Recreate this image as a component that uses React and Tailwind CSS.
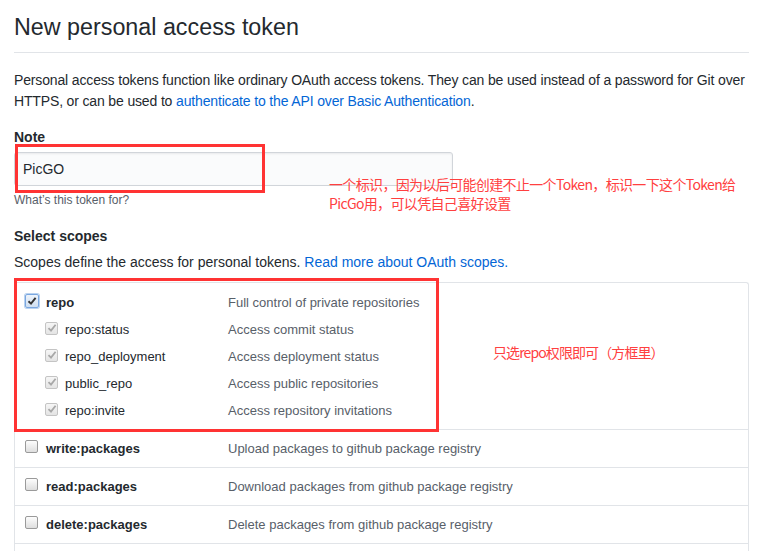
import React from "react";

const font = { fontFamily: '"Liberation Sans", "Noto Sans CJK SC", sans-serif' };

function Check({ kind }) {
  if (kind === "focus") {
    return (
      <span className="flex h-[14px] w-[14px] items-center justify-center rounded-[2px] border border-[#7aa7e0] bg-gradient-to-b from-[#eef4fb] to-[#cfdff1] shadow-[0_0_0_1px_#b9d2ef]">
        <svg width="10" height="10" viewBox="0 0 10 10">
          <path d="M1.5 5.2 L4 7.6 L8.6 1.8" fill="none" stroke="#333" strokeWidth="1.9" />
        </svg>
      </span>
    );
  }
  if (kind === "disabled") {
    return (
      <span className="flex h-[13px] w-[13px] items-center justify-center rounded-[2px] border border-[#c4c4c4] bg-gradient-to-b from-[#f6f6f6] to-[#e4e4e4]">
        <svg width="10" height="10" viewBox="0 0 10 10">
          <path d="M1.5 5.2 L4 7.6 L8.6 1.8" fill="none" stroke="#a8a8a8" strokeWidth="1.8" />
        </svg>
      </span>
    );
  }
  return (
    <span className="block h-[13px] w-[13px] rounded-[2px] border border-[#9a9a9a] bg-gradient-to-b from-[#fdfdfd] to-[#dedede]" />
  );
}

function SubRow({ name, desc, top, kind }) {
  return (
    <div className="flex h-[27px] items-center">
      <div className={`flex items-center ${top ? "w-[213px] pl-[10px]" : "w-[213px] pl-[30px]"}`}>
        <span className="-mt-[3px]">
          <Check kind={kind} />
        </span>
        <span className={`ml-[7px] text-[13px] text-[#24292e] ${top ? "font-bold" : ""}`}>{name}</span>
      </div>
      <div className="text-[13px] text-[#586069]">{desc}</div>
    </div>
  );
}

function PkgRow({ name, desc }) {
  return (
    <div className="flex h-[38px] items-center border-t border-[#e1e4e8]">
      <div className="flex w-[213px] items-center pl-[10px]">
        <span className="-mt-[4px]">
          <Check kind="off" />
        </span>
        <span className="ml-[8px] text-[13px] font-bold text-[#24292e]">{name}</span>
      </div>
      <div className="text-[13px] text-[#586069]">{desc}</div>
    </div>
  );
}

const cjk = { fontFamily: '"Noto Sans CJK SC", sans-serif' };

export default function App() {
  return (
    <div className="relative h-[551px] w-[760px] overflow-hidden bg-white pl-[14px] pr-[11px]" style={font}>
      <h1 className="border-b border-[#e1e4e8] pt-[12px] pb-[10px] text-[23.3px] leading-[30px] font-normal text-[#24292e]">
        New personal access token
      </h1>
      <p className="mt-[17px] text-[14px] leading-[21px] tracking-[-0.15px] text-[#24292e] whitespace-nowrap">
        Personal access tokens function like ordinary OAuth access tokens. They can be used instead of a password for Git over
        <br />
        HTTPS, or can be used to <span className="text-[#0366d6]">authenticate to the API over Basic Authentication</span>.
      </p>
      <div className="mt-[15px] text-[14px] leading-[20px] font-bold text-[#24292e]">Note</div>
      <div className="mt-[5px] flex h-[34px] w-[439px] items-center rounded-[3px] border border-[#d1d5da] bg-[#fafbfc] pl-[8px] text-[14px] text-[#24292e] shadow-[inset_0_1px_2px_rgba(27,31,35,0.075)]">
        PicGO
      </div>
      <div className="mt-[6px] text-[12px] leading-[16px] text-[#586069]">What’s this token for?</div>
      <div className="mt-[18px] text-[14px] leading-[20px] font-bold text-[#24292e]">Select scopes</div>
      <div className="mt-[6px] text-[14px] leading-[20px] text-[#24292e]">
        Scopes define the access for personal tokens. <span className="text-[#0366d6]">Read more about OAuth scopes.</span>
      </div>
      <div className="mt-[10px] rounded-t-[3px] border border-[#e1e4e8] border-b-0">
        <div className="pt-[6px] pb-[5px]">
          <SubRow name="repo" desc="Full control of private repositories" top kind="focus" />
          <SubRow name="repo:status" desc="Access commit status" kind="disabled" />
          <SubRow name="repo_deployment" desc="Access deployment status" kind="disabled" />
          <SubRow name="public_repo" desc="Access public repositories" kind="disabled" />
          <SubRow name="repo:invite" desc="Access repository invitations" kind="disabled" />
        </div>
        <PkgRow name="write:packages" desc="Upload packages to github package registry" />
        <PkgRow name="read:packages" desc="Download packages from github package registry" />
        <PkgRow name="delete:packages" desc="Delete packages from github package registry" />
        <div className="h-[20px] border-t border-[#e1e4e8]" />
      </div>

      {/* annotations */}
      <div className="pointer-events-none absolute left-[15px] top-[144px] h-[49px] w-[250px] border-[3px] border-[#ff3333]" />
      <div className="pointer-events-none absolute left-[14px] top-[278px] h-[154px] w-[425px] border-[3px] border-[#ff3333]" />
      <div className="absolute left-[329px] top-[175px] text-[14px] leading-[19px] tracking-[-0.65px] text-[#ff4040]" style={cjk}>
        一个标识，因为以后可能创建不止一个Token，标识一下这个Token给
        <br />
        PicGo用，可以凭自己喜好设置
      </div>
      <div className="absolute left-[493px] top-[342px] text-[14px] leading-[20px] tracking-[-0.9px] text-[#ff4040]" style={cjk}>
        只选repo权限即可（方框里）
      </div>
    </div>
  );
}
